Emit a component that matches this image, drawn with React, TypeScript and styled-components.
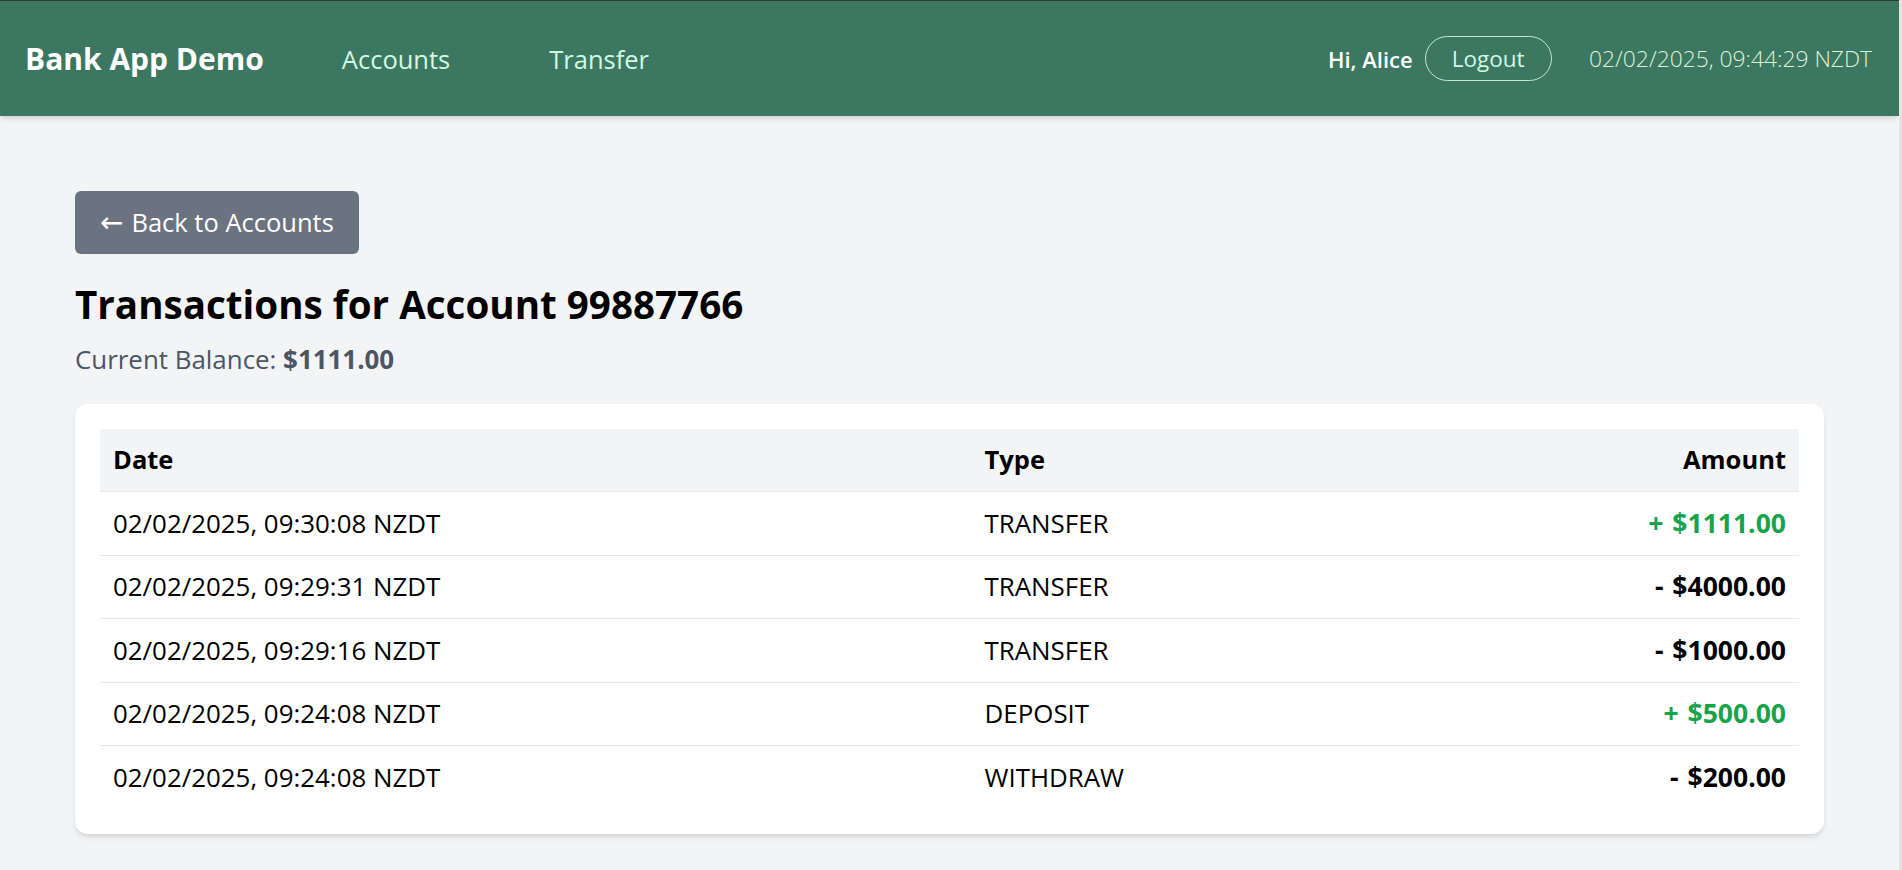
import React from "react";
import styled, { createGlobalStyle } from "styled-components";

const GlobalStyle = createGlobalStyle`
  html {
    overflow: hidden;
  }
  html, body {
    margin: 0;
    padding: 0;
    background: #f3f4f6;
    font-family: "Segoe UI", "Open Sans", "Noto Sans", sans-serif;
    color: #000;
  }
  body {
    border-right: 3px solid #e4e4e4;
  }
  * { box-sizing: border-box; }
`;

const NavBar = styled.nav`
  position: relative;
  z-index: 1;
  display: flex;
  align-items: center;
  justify-content: space-between;
  height: 116px;
  padding: 0 27px 0 25px;
  background: #3c7761;
  border-top: 1px solid #2d3a35;
  box-shadow: 0 4px 6px -1px rgba(0, 0, 0, 0.1), 0 2px 4px -2px rgba(0, 0, 0, 0.1);
`;

const NavGroup = styled.div`
  display: flex;
  align-items: center;
`;

const Logo = styled.div`
  font-size: 30px;
  font-weight: 700;
  color: #fff;
  margin-right: 78px;
`;

const NavLinks = styled.div`
  display: flex;
  gap: 99px;
`;

const NavLink = styled.a`
  font-size: 25.5px;
  color: #d1fae5;
  text-decoration: none;
  cursor: pointer;
`;

const Greeting = styled.span`
  font-size: 22px;
  font-weight: 600;
  color: #fff;
`;

const LogoutButton = styled.button`
  margin-left: 12px;
  font-family: inherit;
  font-size: 22.5px;
  line-height: 31.25px;
  padding: 6px 26px;
  color: #d1fae5;
  background: transparent;
  border: 1px solid #bfe9d3;
  border-radius: 9999px;
  cursor: pointer;
`;

const Clock = styled.span`
  margin-left: 37.5px;
  font-size: 22.8px;
  font-weight: 300;
  color: #dcf5d8;
`;

const Main = styled.main`
  padding: 75px;
`;

const BackButton = styled.button`
  display: inline-flex;
  align-items: center;
  gap: 8px;
  font-family: inherit;
  font-size: 25.5px;
  line-height: 37.5px;
  padding: 12.5px 25px;
  color: #fff;
  background: #6b7280;
  border: none;
  border-radius: 6px;
  margin-bottom: 25px;
  cursor: pointer;
`;

const Arrow = styled.span`
  font-family: "DejaVu Sans", sans-serif;
  font-size: 28px;
  line-height: 37.5px;
`;

const Title = styled.h1`
  margin: 0 0 12.5px;
  font-size: 38.6px;
  line-height: 50px;
  font-weight: 700;
  color: #000;
`;

const Balance = styled.p`
  margin: 0 0 25px;
  font-size: 25.9px;
  line-height: 37.5px;
  color: #4b5563;

  strong {
    font-weight: 700;
  }
`;

const Card = styled.div`
  background: #fff;
  border-radius: 12.5px;
  padding: 25px;
  box-shadow: 0 4px 6px -1px rgba(0, 0, 0, 0.1), 0 2px 4px -2px rgba(0, 0, 0, 0.1);
`;

const Table = styled.table`
  width: 100%;
  border-collapse: collapse;
  table-layout: fixed;
  font-size: 25.9px;
  line-height: 37.5px;
`;

const HeadRow = styled.tr`
  background: #f3f4f6;
  border-bottom: 1px solid #e5e7eb;
`;

const Row = styled.tr`
  border-bottom: 1px solid #e5e7eb;
  &:last-child {
    border-bottom: none;
  }
`;

const HeadCell = styled.th<{ $align?: string; $width?: string }>`
  padding: 12.5px 13px;
  text-align: ${(p) => p.$align || "left"};
  width: ${(p) => p.$width || "auto"};
  font-size: 25.5px;
  font-weight: 700;
  color: #000;
`;

const Cell = styled.td`
  padding: 12.5px 13px;
  text-align: left;
  color: #000;
`;

const AmountCell = styled(Cell)<{ $credit: boolean }>`
  text-align: right;
  font-size: 26.5px;
  font-weight: 700;
  word-spacing: 2px;
  color: ${(p) => (p.$credit ? "#16a34a" : "#000")};
`;

const transactions = [
  { date: "02/02/2025, 09:30:08 NZDT", type: "TRANSFER", amount: "1111.00", credit: true },
  { date: "02/02/2025, 09:29:31 NZDT", type: "TRANSFER", amount: "4000.00", credit: false },
  { date: "02/02/2025, 09:29:16 NZDT", type: "TRANSFER", amount: "1000.00", credit: false },
  { date: "02/02/2025, 09:24:08 NZDT", type: "DEPOSIT", amount: "500.00", credit: true },
  { date: "02/02/2025, 09:24:08 NZDT", type: "WITHDRAW", amount: "200.00", credit: false },
];

export default function App() {
  return (
    <>
      <GlobalStyle />
      <NavBar>
        <NavGroup>
          <Logo>Bank App Demo</Logo>
          <NavLinks>
            <NavLink>Accounts</NavLink>
            <NavLink>Transfer</NavLink>
          </NavLinks>
        </NavGroup>
        <NavGroup>
          <Greeting>Hi, Alice</Greeting>
          <LogoutButton>Logout</LogoutButton>
          <Clock>02/02/2025, 09:44:29 NZDT</Clock>
        </NavGroup>
      </NavBar>
      <Main>
        <BackButton>
          <Arrow>←</Arrow>
          Back to Accounts
        </BackButton>
        <Title>Transactions for Account 99887766</Title>
        <Balance>
          Current Balance: <strong>$1111.00</strong>
        </Balance>
        <Card>
          <Table>
            <thead>
              <HeadRow>
                <HeadCell $width="871.5px">Date</HeadCell>
                <HeadCell>Type</HeadCell>
                <HeadCell $align="right" $width="400px">Amount</HeadCell>
              </HeadRow>
            </thead>
            <tbody>
              {transactions.map((t, i) => (
                <Row key={i}>
                  <Cell>{t.date}</Cell>
                  <Cell>{t.type}</Cell>
                  <AmountCell $credit={t.credit}>
                    {t.credit ? "+" : "-"} ${t.amount}
                  </AmountCell>
                </Row>
              ))}
            </tbody>
          </Table>
        </Card>
      </Main>
    </>
  );
}
